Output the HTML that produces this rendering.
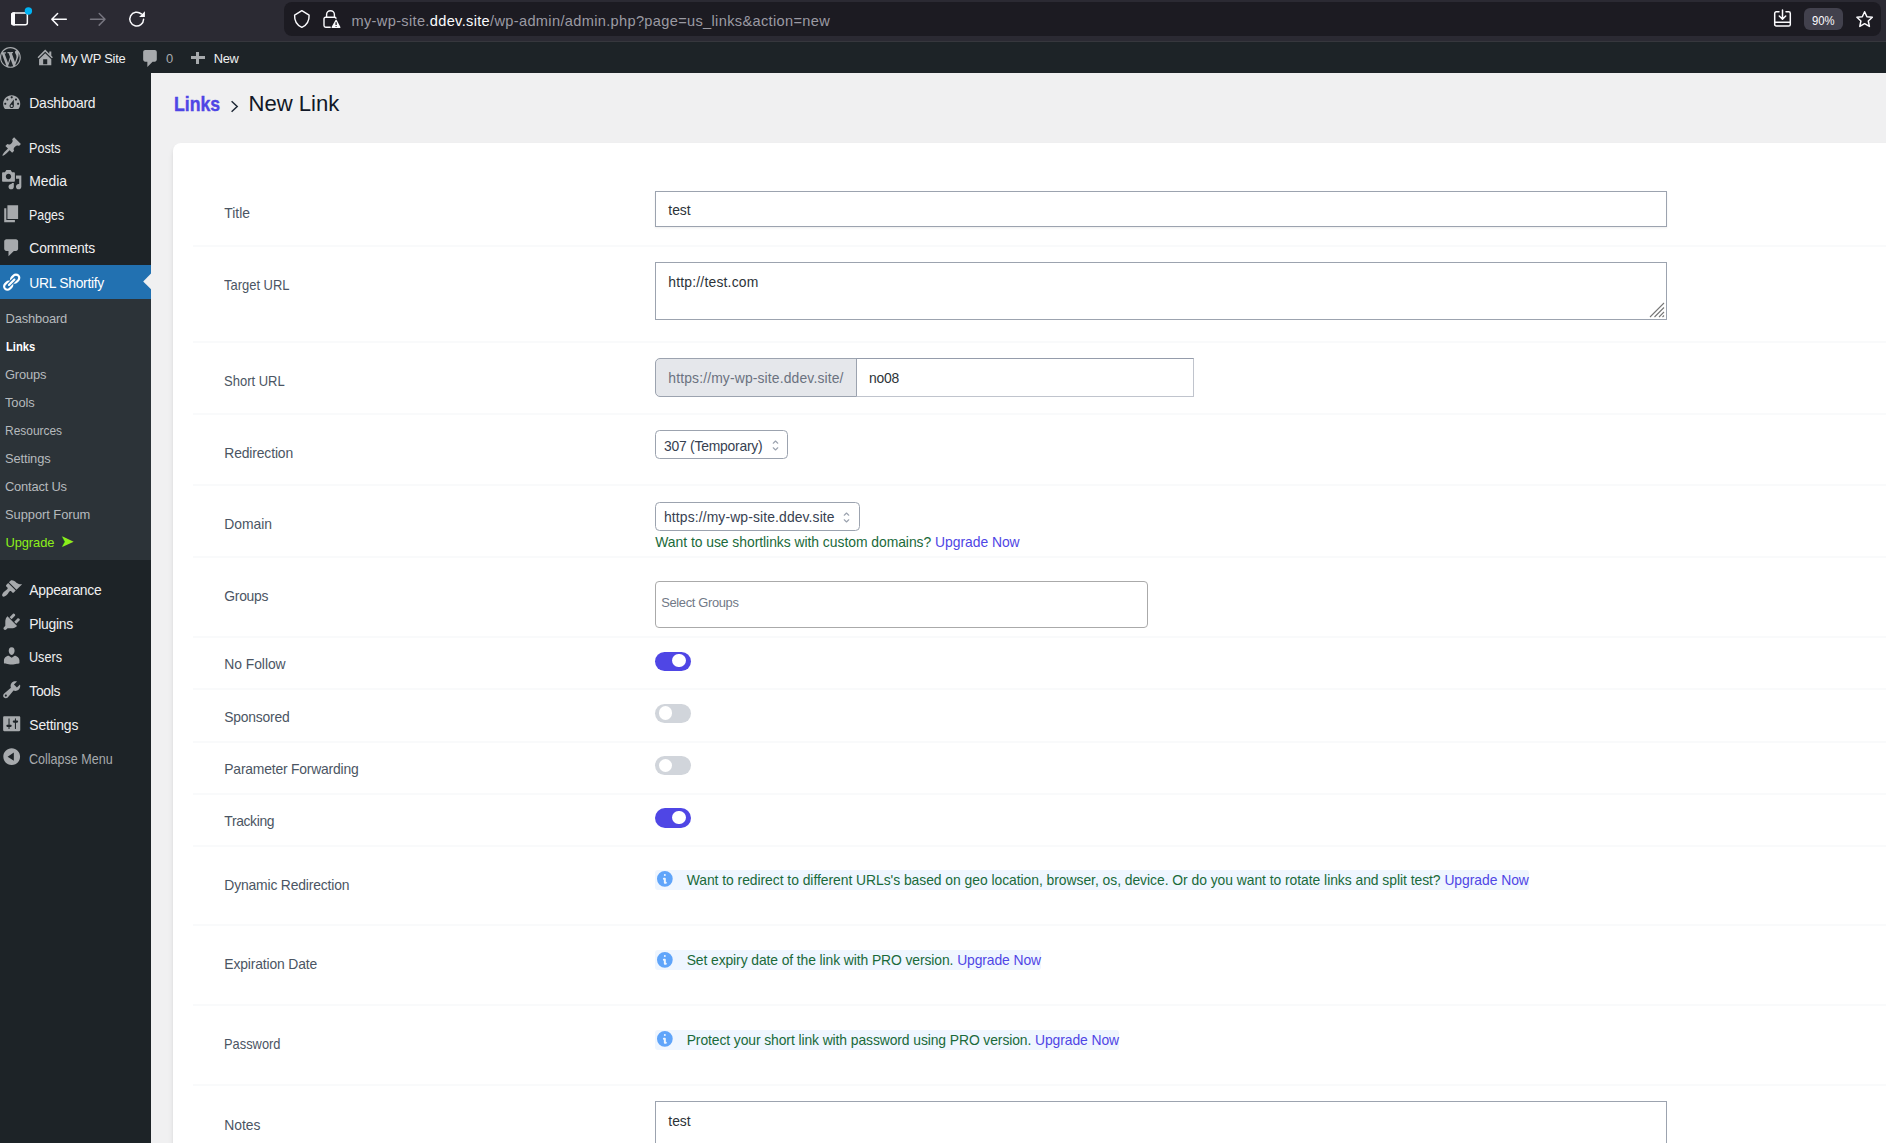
<!DOCTYPE html>
<html lang="en">
<head>
<meta charset="utf-8">
<title>New Link &lsaquo; My WP Site &mdash; WordPress</title>
<style>
*{box-sizing:border-box;margin:0;padding:0}
html,body{width:1886px;height:1143px;overflow:hidden;background:#f0f0f1;font-family:"Liberation Sans", sans-serif}
#root{position:relative;width:1886px;height:1143px;overflow:hidden}
ul,li{list-style:none}
h1,p,label,a,button{font:inherit;font-weight:400;border:0;background:none;text-decoration:none}
.abs,.t,.ic,.sep,.tg,.info,.box{position:absolute}
.t{line-height:1;white-space:nowrap;display:block;transform-origin:0 50%}
.t b{font-weight:400;color:#fbfbfe}
.ic{display:block;overflow:visible}
#chrome{left:0;top:0;width:1886px;height:41px;background:#2b2a33}
#chromeline{left:0;top:40.8px;width:1886px;height:1.2px;background:#36373d}
#urlbar{left:284.4px;top:1.6px;width:1596.6px;height:34.8px;background:#1c1b22;border-radius:8px}
#zoompill{left:1804.3px;top:7.8px;width:38.6px;height:22.2px;border-radius:6px;background:#42414d}
#adminbar{left:0;top:42px;width:1886px;height:30.7px;background:#1d2327}
#side{left:0;top:72.7px;width:151px;height:1071px;background:#1d2327}
#active{left:0;top:265px;width:151px;height:33.8px;background:#2271b1}
#sub{left:0;top:298.8px;width:151px;height:261.4px;background:#2c3338}
#card{left:172.9px;top:142.9px;width:1740px;height:1020px;background:#fff;border-radius:8px;box-shadow:0 4px 6px -1px rgba(0,0,0,.1),0 2px 4px -1px rgba(0,0,0,.06)}
.sep{left:193px;width:1700px;height:2px;background:#f9fafb}
.box{background:#fff;border:1px solid #9ca3af}
.tg{left:654.9px;width:36.2px;height:19.3px;border-radius:10px}
.tg i{position:absolute;border-radius:50%;background:#fff}
.info{left:654.8px;height:19.6px;background:#eff6ff;border-radius:3px}
</style>
</head>
<body>
<div id="root">
<header id="browser">
<div class="abs" id="chrome"></div>
<div class="abs" id="chromeline"></div>
<div class="nav-buttons">
<svg class="ic" style="left:8px;top:5px;width:28px;height:26px" viewBox="0 0 28 26" fill="none">
<rect x="3.75" y="8.05" width="15.6" height="11.7" rx="2" stroke="#fbfbfe" stroke-width="1.5"/>
<path d="M3 10a2.7 2.7 0 0 1 2.7-2.7H7v13.2H5.7A2.7 2.7 0 0 1 3 17.8z" fill="#fbfbfe"/>
<circle cx="20.4" cy="6" r="3.7" fill="#00b3f4"/></svg>
<svg class="ic" style="left:50px;top:11px;width:18px;height:17px" viewBox="0 0 18 17" fill="none" stroke="#fbfbfe" stroke-width="1.5" stroke-linecap="round" stroke-linejoin="round">
<path d="M16.3 8.3H1.8M7.6 2.5L1.8 8.3l5.8 5.8"/></svg>
<svg class="ic" style="left:89px;top:11px;width:18px;height:17px" viewBox="0 0 18 17" fill="none" stroke="#76757f" stroke-width="1.5" stroke-linecap="round" stroke-linejoin="round">
<path d="M1.5 8.3H16M10.2 2.5L16 8.3l-5.8 5.8"/></svg>
<svg class="ic" style="left:127px;top:9px;width:20px;height:20px" viewBox="0 0 20 20" fill="none">
<path d="M16.6 10.2a6.9 6.9 0 1 1-2.3-5.3" stroke="#fbfbfe" stroke-width="1.5" stroke-linecap="round"/>
<path d="M17.9 2.3v5.4a.4.4 0 0 1-.4.4h-5.4z" fill="#fbfbfe"/></svg>
</div>
<div class="abs" id="urlbar"></div>
<svg class="ic" style="left:292px;top:8px;width:20px;height:22px" viewBox="0 0 20 22" fill="none">
<path d="M9.850 2.700L17.100 7.200C17.350 12.600 15 17 9.850 19.400 4.700 17 2.350 12.600 2.600 7.200z" stroke="#fbfbfe" stroke-width="1.4" stroke-linejoin="round"/></svg>
<svg class="ic" style="left:321px;top:8px;width:22px;height:22px" viewBox="0 0 22 22" fill="none">
<path d="M5.6 9.2V6.600a3.900 3.900 0 0 1 7.800 0V9.200" stroke="#fbfbfe" stroke-width="1.4"/>
<path d="M9.2 19.300H4.700A1.700 1.700 0 0 1 3 17.600v-6.800a1.600 1.600 0 0 1 1.600-1.600h8.900a1.600 1.600 0 0 1 1.500 1" stroke="#fbfbfe" stroke-width="1.4" stroke-linecap="round"/>
<path d="M14.500 12a.7.700 0 0 1 1.200 0l3.700 7.100a.7.700 0 0 1-.6 1H11.200a.7.700 0 0 1-.6-1z" fill="#fbfbfe" stroke="#1c1b22" stroke-width="1.2" paint-order="stroke"/>
<path d="M15.100 14.300v2.800M15.100 18v.7" stroke="#1c1b22" stroke-width="1.300"/></svg>
<span class="t" id="url" style="left:351.50px;top:14px;font-size:14.6px;color:#9b9aa3;letter-spacing:0.332px;">my-wp-site.<b>ddev.site</b>/wp-admin/admin.php?page=us_links&amp;action=new</span>
<svg class="ic" style="left:1772px;top:8px;width:21px;height:20px" viewBox="0 0 21 20" fill="none" stroke="#fbfbfe" stroke-width="1.5" stroke-linejoin="round" stroke-linecap="round">
<path d="M7 3.800H4.300a1.600 1.600 0 0 0-1.600 1.600v11a1.600 1.600 0 0 0 1.600 1.600h12.400a1.600 1.600 0 0 0 1.600-1.600v-11a1.600 1.600 0 0 0-1.600-1.600H14"/>
<path d="M2.900 14.300h15.200M10.500 2v8.600M7.300 8l3.200 3.200L13.700 8"/></svg>
<div class="abs" id="zoompill"></div>
<span class="t" id="zoom" style="left:1812.10px;top:15px;font-size:12.3px;color:#fbfbfe;transform:scaleX(0.9178);">90%</span>
<svg class="ic" style="left:1854px;top:9px;width:21px;height:20px" viewBox="0 0 21 20" fill="none">
<path d="M10.600 2.700l2.300 5 5.400.6-4 3.700 1.100 5.400-4.800-2.700-4.800 2.700L6.900 12l-4-3.700 5.400-.6z" stroke="#fbfbfe" stroke-width="1.500" stroke-linejoin="round"/></svg>
</header>
<div id="wpadminbar">
<div class="abs" id="adminbar"></div>
<ul class="ab-top-menu">
<li id="wp-admin-bar-wp-logo"><svg class="ic" style="left:0.4px;top:47.1px;width:20.8px;height:20.8px" viewBox="0 0 20 20"><path fill="#a7aaad"  d="M20 10c0-5.51-4.49-10-10-10C4.48 0 0 4.49 0 10c0 5.52 4.48 10 10 10 5.51 0 10-4.48 10-10zM7.78 15.37L4.37 6.22c.55-.02 1.17-.08 1.17-.08.5-.06.44-1.13-.06-1.11 0 0-1.45.11-2.37.11-.18 0-.37 0-.58-.01C4.12 2.69 6.87 1.11 10 1.11c2.33 0 4.45.87 6.05 2.34-.68-.11-1.65.39-1.65 1.58 0 .74.45 1.36.9 2.1.35.61.55 1.36.55 2.46 0 1.49-1.4 5-1.4 5l-3.03-8.37c.54-.02.82-.17.82-.17.5-.05.44-1.25-.06-1.22 0 0-1.44.12-2.38.12-.87 0-2.33-.12-2.33-.12-.5-.03-.56 1.2-.06 1.22l.92.08 1.26 3.41zM17.41 10c.24-.64.74-1.87.43-4.25.7 1.29 1.05 2.71 1.05 4.25 0 3.29-1.73 6.24-4.4 7.78.97-2.59 1.94-5.2 2.92-7.78zM6.1 18.09C3.12 16.65 1.11 13.53 1.11 10c0-1.3.23-2.48.72-3.59C3.25 10.3 4.67 14.2 6.1 18.09zm4.03-6.63l2.58 6.98c-.86.29-1.76.45-2.71.45-.79 0-1.57-.11-2.29-.33.81-2.38 1.62-4.74 2.42-7.1z"/></svg></li>
<li id="wp-admin-bar-site-name"><svg class="ic" style="left:34.7px;top:47.1px;width:20.4px;height:20.4px" viewBox="0 0 20 20"><path fill="#a7aaad"  d="M16 8.5l1.53 1.53-1.06 1.06L10 4.62l-6.47 6.47-1.06-1.06L10 2.5l4 4v-2h2v4zm-6-2.46l6 5.99V18H4v-5.97zM12 17v-5H8v5h4z"/></svg><a class="t" id="ab-site" style="left:60.60px;top:53px;font-size:12.9px;color:#f0f0f1;letter-spacing:-0.219px;">My WP Site</a></li>
<li id="wp-admin-bar-comments"><svg class="ic" style="left:139.7px;top:48.2px;width:21px;height:21px" viewBox="0 0 20 20"><path fill="#a7aaad"  d="M5 2h9c1.1 0 2 .9 2 2v7c0 1.1-.9 2-2 2h-2l-5 5v-5H5c-1.1 0-2-.9-2-2V4c0-1.1.9-2 2-2z"/></svg><span class="t" id="ab-comments" style="left:166.00px;top:53px;font-size:12.9px;color:#a7aaad;letter-spacing:-0.272px;">0</span></li>
<li id="wp-admin-bar-new-content"><i class="abs" style="left:190.9px;top:56.4px;width:13.8px;height:3px;background:#a7aaad"></i><i class="abs" style="left:196.3px;top:51.5px;width:3px;height:12.8px;background:#a7aaad"></i><a class="t" id="ab-new" style="left:213.80px;top:53px;font-size:12.9px;color:#f0f0f1;letter-spacing:-0.332px;">New</a></li>
</ul>
</div>
<nav id="adminmenuwrap">
<div class="abs" id="side"></div>
<ul id="adminmenu">
<li class="menu-top"><svg class="ic" style="left:0.75px;top:91.6px;width:21.4px;height:21.4px" viewBox="0 0 20 20"><path fill="#a7aaad"  d="M3.76 16h12.48c1.1-1.37 1.76-3.11 1.76-5 0-4.42-3.58-8-8-8s-8 3.58-8 8c0 1.89.66 3.63 1.76 5zM10 4c.55 0 1 .45 1 1s-.45 1-1 1-1-.45-1-1 .45-1 1-1zM6 6c.55 0 1 .45 1 1s-.45 1-1 1-1-.45-1-1 .45-1 1-1zm8 0c.55 0 1 .45 1 1s-.45 1-1 1-1-.45-1-1 .45-1 1-1zm-5.37 5.55L12 7v6c0 1.1-.9 2-2 2s-2-.9-2-2c0-.57.24-1.08.63-1.45zM4 10c.55 0 1 .45 1 1s-.45 1-1 1-1-.45-1-1 .45-1 1-1zm12 0c.55 0 1 .45 1 1s-.45 1-1 1-1-.45-1-1 .45-1 1-1zm-5 3c0-.55-.45-1-1-1s-1 .45-1 1 .45 1 1 1 1-.45 1-1z"/></svg><a class="t" id="m-dashboard" style="left:29.30px;top:97px;font-size:13.9px;color:#f0f0f1;letter-spacing:-0.208px;">Dashboard</a></li>
<li class="menu-top"><svg class="ic" style="left:0.75px;top:136.0px;width:21.4px;height:21.4px" viewBox="0 0 20 20"><path fill="#a7aaad"  d="M10.44 3.02l1.82-1.82 6.36 6.35-1.83 1.82c-1.05-.68-2.48-.57-3.41.36l-.75.75c-.92.93-1.04 2.35-.35 3.41l-1.83 1.82-2.41-2.41-2.8 2.79c-.42.42-3.38 2.71-3.8 2.29s1.86-3.39 2.28-3.81l2.79-2.79L4.1 9.36l1.83-1.82c1.05.69 2.48.57 3.4-.36l.75-.75c.93-.92 1.05-2.35.36-3.41z"/></svg><a class="t" id="m-posts" style="left:29.30px;top:142px;font-size:13.9px;color:#f0f0f1;transform:scaleX(0.9122);">Posts</a></li>
<li class="menu-top"><svg class="ic" style="left:0.75px;top:169.3px;width:21.4px;height:21.4px" viewBox="0 0 20 20"><path fill="#a7aaad"  d="M13 11V4c0-.55-.45-1-1-1h-1.67L9 1H5L3.67 3H2c-.55 0-1 .45-1 1v7c0 .55.45 1 1 1h10c.55 0 1-.45 1-1zM7 4.5c1.38 0 2.5 1.12 2.5 2.5S8.38 9.5 7 9.5 4.5 8.38 4.5 7 5.62 4.5 7 4.5zM14 6h5v10.5c0 1.38-1.12 2.5-2.5 2.5S14 17.88 14 16.5s1.12-2.5 2.5-2.5c.17 0 .34.02.5.05V9h-3V6zm-4 8.05V13h2v3.5c0 1.38-1.12 2.5-2.5 2.5S7 17.88 7 16.5 8.12 14 9.5 14c.17 0 .34.02.5.05z"/></svg><a class="t" id="m-media" style="left:29.30px;top:175px;font-size:13.9px;color:#f0f0f1;letter-spacing:-0.029px;">Media</a></li>
<li class="menu-top"><svg class="ic" style="left:0.75px;top:203.2px;width:21.4px;height:21.4px" viewBox="0 0 20 20"><path fill="#a7aaad"  d="M6 15V2h10v13H6zm-1 1h8v2H3V5h2v11z"/></svg><a class="t" id="m-pages" style="left:29.30px;top:209px;font-size:13.9px;color:#f0f0f1;transform:scaleX(0.8936);">Pages</a></li>
<li class="menu-top"><svg class="ic" style="left:0.75px;top:237.3px;width:21.4px;height:21.4px" viewBox="0 0 20 20"><path fill="#a7aaad"  d="M5 2h9c1.1 0 2 .9 2 2v7c0 1.1-.9 2-2 2h-2l-5 5v-5H5c-1.1 0-2-.9-2-2V4c0-1.1.9-2 2-2z"/></svg><a class="t" id="m-comments" style="left:29.30px;top:242px;font-size:13.9px;color:#f0f0f1;letter-spacing:-0.182px;">Comments</a></li>
<li class="menu-top current">
<div class="abs" id="active"></div>
<svg class="ic" style="left:143px;top:273px;width:8px;height:17px" viewBox="0 0 8 17"><path d="M8 0.500V16.300L0.200 8.400z" fill="#f0f0f1"/></svg>
<svg class="ic" style="left:1.45px;top:271.5px;width:20.4px;height:20.4px" viewBox="0 0 20 20"><path fill="#fff"  d="M17.74 2.76c1.68 1.69 1.68 4.41 0 6.1l-1.53 1.52c-1.12 1.12-2.7 1.47-4.14 1.09l2.62-2.61.76-.77.76-.76c.84-.84.84-2.2 0-3.04-.84-.85-2.2-.85-3.04 0l-.77.76-3.38 3.38c-.37-1.44-.02-3.02 1.1-4.14l1.52-1.53c1.69-1.68 4.42-1.68 6.1 0zM8.59 13.43l5.34-5.34c.42-.42.42-1.1 0-1.52-.44-.43-1.13-.39-1.53 0l-5.33 5.34c-.42.42-.42 1.1 0 1.52.44.43 1.13.39 1.52 0zm-.76 2.29l4.14-4.15c.38 1.44.03 3.02-1.09 4.14l-1.52 1.53c-1.69 1.68-4.41 1.68-6.1 0-1.68-1.68-1.68-4.42 0-6.1l1.53-1.52c1.12-1.12 2.7-1.47 4.14-1.1l-4.14 4.15c-.85.84-.85 2.2 0 3.05.84.84 2.2.84 3.04 0z"/></svg><a class="t" id="m-url-shortify" style="left:29.30px;top:277px;font-size:13.9px;color:#fff;letter-spacing:-0.295px;">URL Shortify</a>
<div class="abs" id="sub"></div>
<ul class="wp-submenu">
<li><a class="t" id="s-dashboard" style="left:5.50px;top:313px;font-size:12.9px;color:#b6babd;letter-spacing:-0.174px;">Dashboard</a></li>
<li class="current"><a class="t" id="s-links" style="left:5.50px;top:341px;font-size:12.9px;color:#fff;font-weight:700;transform:scaleX(0.8702);">Links</a></li>
<li><a class="t" id="s-groups" style="left:5.00px;top:369px;font-size:12.9px;color:#b6babd;letter-spacing:-0.164px;">Groups</a></li>
<li><a class="t" id="s-tools" style="left:5.00px;top:397px;font-size:12.9px;color:#b6babd;letter-spacing:-0.119px;">Tools</a></li>
<li><a class="t" id="s-resources" style="left:5.00px;top:425px;font-size:12.9px;color:#b6babd;transform:scaleX(0.9266);">Resources</a></li>
<li><a class="t" id="s-settings" style="left:5.00px;top:453px;font-size:12.9px;color:#b6babd;letter-spacing:-0.135px;">Settings</a></li>
<li><a class="t" id="s-contact-us" style="left:5.00px;top:481px;font-size:12.9px;color:#b6babd;letter-spacing:-0.197px;">Contact Us</a></li>
<li><a class="t" id="s-support-forum" style="left:5.00px;top:509px;font-size:12.9px;color:#b6babd;letter-spacing:-0.053px;">Support Forum</a></li>
<li><a class="t" id="s-upgrade" style="left:5.50px;top:537px;font-size:12.9px;color:#8cf01a;letter-spacing:-0.093px;">Upgrade</a><span class="t" id="s-upgrade-arrow" style="left:60.40px;top:534px;font-size:16.6px;color:#8cf01a;">&#10148;</span></li>
</ul>
</li>
<li class="menu-top"><svg class="ic" style="left:0.75px;top:577.5px;width:21.4px;height:21.4px" viewBox="0 0 20 20"><path fill="#a7aaad"  d="M14.48 11.06L7.41 3.99l1.5-1.5c.5-.56 2.3-.47 3.51.32 1.21.8 1.43 1.28 2.91 2.1 1.18.64 2.45 1.26 4.45.85zm-.71.71L6.7 4.7 4.93 6.47c-.39.39-.39 1.02 0 1.41l1.06 1.06c.39.39.39 1.03 0 1.42-.6.6-1.43 1.11-2.21 1.69-.35.26-.7.53-1.01.84C1.43 14.23.4 16.08 1.4 17.07c.99 1 2.84-.03 4.18-1.36.31-.31.58-.66.85-1.02.57-.78 1.08-1.61 1.69-2.21.39-.39 1.02-.39 1.41 0l1.06 1.06c.39.39 1.02.39 1.41 0z"/></svg><a class="t" id="m-appearance" style="left:29.30px;top:584px;font-size:13.9px;color:#f0f0f1;letter-spacing:-0.282px;">Appearance</a></li>
<li class="menu-top"><svg class="ic" style="left:0.75px;top:611.1px;width:21.4px;height:21.4px" viewBox="0 0 20 20"><path fill="#a7aaad"  d="M13.11 4.36L9.87 7.6 8 5.73l3.24-3.24c.35-.34 1.05-.2 1.56.32.52.51.66 1.21.31 1.55zm-8 1.77l.91-1.12 9.01 9.01-1.19.84c-.71.71-2.63 1.16-3.82 1.16H6.14L4.9 17.26c-.59.59-1.54.59-2.12 0-.59-.58-.59-1.53 0-2.12l1.24-1.24v-3.88c0-1.13.4-3.19 1.09-3.89zm7.26 3.97l3.24-3.24c.34-.35 1.04-.21 1.55.31.52.51.66 1.21.31 1.55l-3.24 3.25z"/></svg><a class="t" id="m-plugins" style="left:29.30px;top:618px;font-size:13.9px;color:#f0f0f1;letter-spacing:-0.266px;">Plugins</a></li>
<li class="menu-top"><svg class="ic" style="left:0.75px;top:644.9px;width:21.4px;height:21.4px" viewBox="0 0 20 20"><path fill="#a7aaad"  d="M10 9.25c-2.27 0-2.73-3.44-2.73-3.44C7 4.02 7.82 2 9.97 2c2.16 0 2.98 2.02 2.71 3.81 0 0-.41 3.44-2.68 3.44zm0 2.57L12.72 10c2.39 0 4.52 2.33 4.52 4.53v2.49s-3.65 1.13-7.24 1.13c-3.65 0-7.24-1.13-7.24-1.13v-2.49c0-2.25 1.94-4.48 4.47-4.48z"/></svg><a class="t" id="m-users" style="left:29.30px;top:651px;font-size:13.9px;color:#f0f0f1;transform:scaleX(0.9096);">Users</a></li>
<li class="menu-top"><svg class="ic" style="left:0.75px;top:678.8px;width:21.4px;height:21.4px" viewBox="0 0 20 20"><path fill="#a7aaad"  d="M16.68 9.77c-1.34 1.34-3.3 1.67-4.95.99l-5.41 6.52c-.99.99-2.59.99-3.58 0s-.99-2.59 0-3.57l6.52-5.42c-.68-1.65-.35-3.61.99-4.95 1.28-1.28 3.12-1.62 4.72-1.06l-2.89 2.89 2.82 2.82 2.86-2.87c.53 1.58.18 3.39-1.08 4.65zM3.81 16.21c.4.39 1.04.39 1.43 0 .4-.4.4-1.04 0-1.43-.39-.4-1.03-.4-1.43 0-.39.39-.39 1.03 0 1.43z"/></svg><a class="t" id="m-tools" style="left:29.30px;top:685px;font-size:13.9px;color:#f0f0f1;letter-spacing:-0.307px;">Tools</a></li>
<li class="menu-top"><svg class="ic" style="left:0.75px;top:712.7px;width:21.4px;height:21.4px" viewBox="0 0 20 20"><path fill="#a7aaad"  d="M18 16V4c0-.55-.45-1-1-1H3c-.55 0-1 .45-1 1v12c0 .55.45 1 1 1h14c.55 0 1-.45 1-1zM8 11h1c.55 0 1 .45 1 1s-.45 1-1 1H8v1.5c0 .28-.22.5-.5.5s-.5-.22-.5-.5V13H6c-.55 0-1-.45-1-1s.45-1 1-1h1V5.5c0-.28.22-.5.5-.5s.5.22.5.5V11zm5-2h-1c-.55 0-1-.45-1-1s.45-1 1-1h1V5.5c0-.28.22-.5.5-.5s.5.22.5.5V7h1c.55 0 1 .45 1 1s-.45 1-1 1h-1v5.5c0 .28-.22.5-.5.5s-.5-.22-.5-.5V9z"/></svg><a class="t" id="m-settings" style="left:29.30px;top:719px;font-size:13.9px;color:#f0f0f1;letter-spacing:-0.163px;">Settings</a></li>
<li id="collapse-menu"><svg class="ic" style="left:0.75px;top:745.9px;width:21.4px;height:21.4px" viewBox="0 0 20 20"><path fill="#a7aaad"  d="M10 2.16c4.33 0 7.84 3.51 7.84 7.84s-3.51 7.84-7.84 7.84S2.16 14.33 2.16 10 5.67 2.16 10 2.16zm2 11.72V6.12L6.18 9.97z"/></svg><button class="t" id="m-collapse" style="left:29.40px;top:753px;font-size:13.9px;color:#a7aaad;transform:scaleX(0.9033);">Collapse Menu</button></li>
</ul>
</nav>
<main id="wpcontent">
<h1 class="heading">
<a class="t" id="h-links" style="left:174.00px;top:94px;font-size:20.2px;color:#4f46e5;font-weight:700;transform:scaleX(0.8761);-webkit-text-stroke:0.4px #4f46e5;">Links</a>
<svg class="ic" style="left:229.5px;top:99.7px;width:9px;height:13px" viewBox="0 0 9 13" fill="none"><path d="M1.600 1.200L7.200 6.500L1.600 11.800" stroke="#1f2937" stroke-width="1.500"/></svg>
<span class="t" id="h-new" style="left:248.60px;top:93px;font-size:22.1px;color:#111827;letter-spacing:-0.022px;">New Link</span>
</h1>
<form id="card-form">
<div class="abs" id="card"></div>
<div class="row"><label class="t" id="l-title" style="left:224.30px;top:207px;font-size:13.9px;color:#4b5563;letter-spacing:-0.027px;">Title</label>
<div class="box" style="left:654.7px;top:190.6px;width:1012px;height:36.6px;box-shadow:0 1px 2px rgba(0,0,0,.07)"></div>
<span class="t" id="f-title" style="left:668.30px;top:204px;font-size:13.9px;color:#2c3338;letter-spacing:-0.023px;">test</span></div>
<div class="sep" style="top:245.00px"></div>
<div class="row"><label class="t" id="l-target" style="left:224.30px;top:279px;font-size:13.9px;color:#4b5563;transform:scaleX(0.9322);">Target URL</label>
<div class="box" style="left:654.7px;top:262px;width:1012px;height:57.8px"></div>
<svg class="ic" style="left:1649px;top:302px;width:16px;height:16px" viewBox="0 0 16 16"><path d="M15 1L1 15M15 5.500L5.500 15M15 10L10 15M15 13.500L13.500 15" stroke="#777" stroke-width="1.100"/></svg>
<span class="t" id="f-target" style="left:668.30px;top:276px;font-size:13.9px;color:#2c3338;letter-spacing:0.197px;">http://test.com</span></div>
<div class="sep" style="top:340.50px"></div>
<div class="row"><label class="t" id="l-short" style="left:224.30px;top:375px;font-size:13.9px;color:#4b5563;transform:scaleX(0.9359);">Short URL</label>
<div class="box" style="left:654.7px;top:358px;width:202px;height:39px;background:#e5e7eb;border-radius:5px 0 0 5px"></div>
<span class="t" id="f-prefix" style="left:668.30px;top:372px;font-size:13.9px;color:#6b7280;letter-spacing:0.144px;">https://my-wp-site.ddev.site/</span>
<div class="box" style="left:855.7px;top:358px;width:338px;height:39px;border-color:#959cab #c0c4cd #c0c4cd #9ca3af"></div>
<span class="t" id="f-slug" style="left:869.00px;top:372px;font-size:13.9px;color:#2c3338;letter-spacing:-0.227px;">no08</span></div>
<div class="sep" style="top:412.50px"></div>
<div class="row"><label class="t" id="l-redir" style="left:224.30px;top:447px;font-size:13.9px;color:#4b5563;letter-spacing:-0.142px;">Redirection</label>
<div class="box" style="left:654.7px;top:429.6px;width:133.5px;height:29.2px;border-radius:4.5px"></div>
<span class="t" id="f-redir" style="left:663.90px;top:440px;font-size:13.9px;color:#374151;letter-spacing:-0.220px;">307 (Temporary)</span><svg class="ic" style="left:767.6px;top:437.6px;width:15px;height:15px" viewBox="0 0 20 20" fill="none"><path d="M7 7l3-3 3 3m0 6l-3 3-3-3" stroke="#9ca3af" stroke-width="1.5" stroke-linecap="round" stroke-linejoin="round"/></svg></div>
<div class="sep" style="top:484.40px"></div>
<div class="row"><label class="t" id="l-domain" style="left:224.30px;top:518px;font-size:13.9px;color:#4b5563;letter-spacing:-0.029px;">Domain</label>
<div class="box" style="left:654.7px;top:502px;width:205px;height:29.2px;border-radius:4.5px"></div>
<span class="t" id="f-domain" style="left:664.00px;top:511px;font-size:13.9px;color:#374151;letter-spacing:0.123px;">https://my-wp-site.ddev.site</span><svg class="ic" style="left:838.5px;top:510px;width:15px;height:15px" viewBox="0 0 20 20" fill="none"><path d="M7 7l3-3 3 3m0 6l-3 3-3-3" stroke="#9ca3af" stroke-width="1.5" stroke-linecap="round" stroke-linejoin="round"/></svg>
<p class="t" id="f-domain-help" style="left:655.30px;top:536px;font-size:13.9px;color:#1a6a3a;letter-spacing:-0.035px;">Want to use shortlinks with custom domains? <a style="color:#4f46e5">Upgrade Now</a></p></div>
<div class="sep" style="top:556.00px"></div>
<div class="row"><label class="t" id="l-groups" style="left:224.30px;top:590px;font-size:13.9px;color:#4b5563;letter-spacing:-0.277px;">Groups</label>
<div class="box" style="left:654.7px;top:581px;width:493.5px;height:47.2px;border-radius:4px;border-color:#aaa"></div>
<span class="t" id="f-groups" style="left:661.20px;top:597px;font-size:12.9px;color:#717987;letter-spacing:-0.330px;">Select Groups</span></div>
<div class="sep" style="top:636.20px"></div>
<div class="row"><label class="t" id="l-nofollow" style="left:224.30px;top:658px;font-size:13.9px;color:#4b5563;letter-spacing:-0.052px;">No Follow</label><div class="tg" style="top:651.7px;background:#4f46e5"><i style="left:16.9px;top:2.4px;width:14.4px;height:12.9px;border-radius:6.45px"></i></div></div>
<div class="sep" style="top:688.30px"></div>
<div class="row"><label class="t" id="l-sponsored" style="left:224.30px;top:711px;font-size:13.9px;color:#4b5563;letter-spacing:-0.234px;">Sponsored</label><div class="tg" style="top:703.8px;background:#d1d5db"><i style="left:3.8px;top:2.7px;width:13.7px;height:13.5px"></i></div></div>
<div class="sep" style="top:740.60px"></div>
<div class="row"><label class="t" id="l-paramfwd" style="left:224.30px;top:763px;font-size:13.9px;color:#4b5563;letter-spacing:-0.199px;">Parameter Forwarding</label><div class="tg" style="top:756.1px;background:#d1d5db"><i style="left:3.8px;top:2.7px;width:13.7px;height:13.5px"></i></div></div>
<div class="sep" style="top:792.60px"></div>
<div class="row"><label class="t" id="l-tracking" style="left:224.30px;top:815px;font-size:13.9px;color:#4b5563;letter-spacing:-0.369px;">Tracking</label><div class="tg" style="top:808.3px;background:#4f46e5"><i style="left:16.9px;top:2.4px;width:14.4px;height:12.9px;border-radius:6.45px"></i></div></div>
<div class="sep" style="top:844.60px"></div>
<div class="row"><label class="t" id="l-dynamic" style="left:224.30px;top:879px;font-size:13.9px;color:#4b5563;letter-spacing:-0.166px;">Dynamic Redirection</label>
<div class="info" style="top:870px;width:874.0px"></div><svg class="ic" style="left:654.95px;top:869.4px;width:19.7px;height:19.7px" viewBox="0 0 20 20"><path fill="#60a5fa" fill-rule="evenodd" clip-rule="evenodd" d="M18 10a8 8 0 11-16 0 8 8 0 0116 0zm-7-4a1 1 0 11-2 0 1 1 0 012 0zM9 9a1 1 0 000 2v3a1 1 0 001 1h1a1 1 0 100-2v-3a1 1 0 00-1-1H9z"/></svg><p class="t" id="i-dynamic" style="left:686.70px;top:874px;font-size:13.9px;color:#1a6a3a;letter-spacing:-0.043px;">Want to redirect to different URLs's based on geo location, browser, os, device. Or do you want to rotate links and split test? <a style="color:#4f46e5">Upgrade Now</a></p></div>
<div class="sep" style="top:924.20px"></div>
<div class="row"><label class="t" id="l-expiry" style="left:224.30px;top:958px;font-size:13.9px;color:#4b5563;letter-spacing:-0.146px;">Expiration Date</label>
<div class="info" style="top:950.3px;width:386.2px"></div><svg class="ic" style="left:654.95px;top:949.7px;width:19.7px;height:19.7px" viewBox="0 0 20 20"><path fill="#60a5fa" fill-rule="evenodd" clip-rule="evenodd" d="M18 10a8 8 0 11-16 0 8 8 0 0116 0zm-7-4a1 1 0 11-2 0 1 1 0 012 0zM9 9a1 1 0 000 2v3a1 1 0 001 1h1a1 1 0 100-2v-3a1 1 0 00-1-1H9z"/></svg><p class="t" id="i-expiry" style="left:686.70px;top:954px;font-size:13.9px;color:#1a6a3a;letter-spacing:-0.096px;">Set expiry date of the link with PRO version. <a style="color:#4f46e5">Upgrade Now</a></p></div>
<div class="sep" style="top:1004.40px"></div>
<div class="row"><label class="t" id="l-password" style="left:224.30px;top:1038px;font-size:13.9px;color:#4b5563;transform:scaleX(0.9262);">Password</label>
<div class="info" style="top:1030px;width:464.2px"></div><svg class="ic" style="left:654.95px;top:1029.4px;width:19.7px;height:19.7px" viewBox="0 0 20 20"><path fill="#60a5fa" fill-rule="evenodd" clip-rule="evenodd" d="M18 10a8 8 0 11-16 0 8 8 0 0116 0zm-7-4a1 1 0 11-2 0 1 1 0 012 0zM9 9a1 1 0 000 2v3a1 1 0 001 1h1a1 1 0 100-2v-3a1 1 0 00-1-1H9z"/></svg><p class="t" id="i-password" style="left:686.70px;top:1034px;font-size:13.9px;color:#1a6a3a;letter-spacing:-0.092px;">Protect your short link with password using PRO version. <a style="color:#4f46e5">Upgrade Now</a></p></div>
<div class="sep" style="top:1084.40px"></div>
<div class="row"><label class="t" id="l-notes" style="left:224.30px;top:1119px;font-size:13.9px;color:#4b5563;letter-spacing:-0.039px;">Notes</label>
<div class="box" style="left:654.7px;top:1101px;width:1012px;height:60px"></div>
<span class="t" id="f-notes" style="left:668.30px;top:1115px;font-size:13.9px;color:#2c3338;letter-spacing:-0.023px;">test</span></div>
</form>
</main>
</div>
</body>
</html>
